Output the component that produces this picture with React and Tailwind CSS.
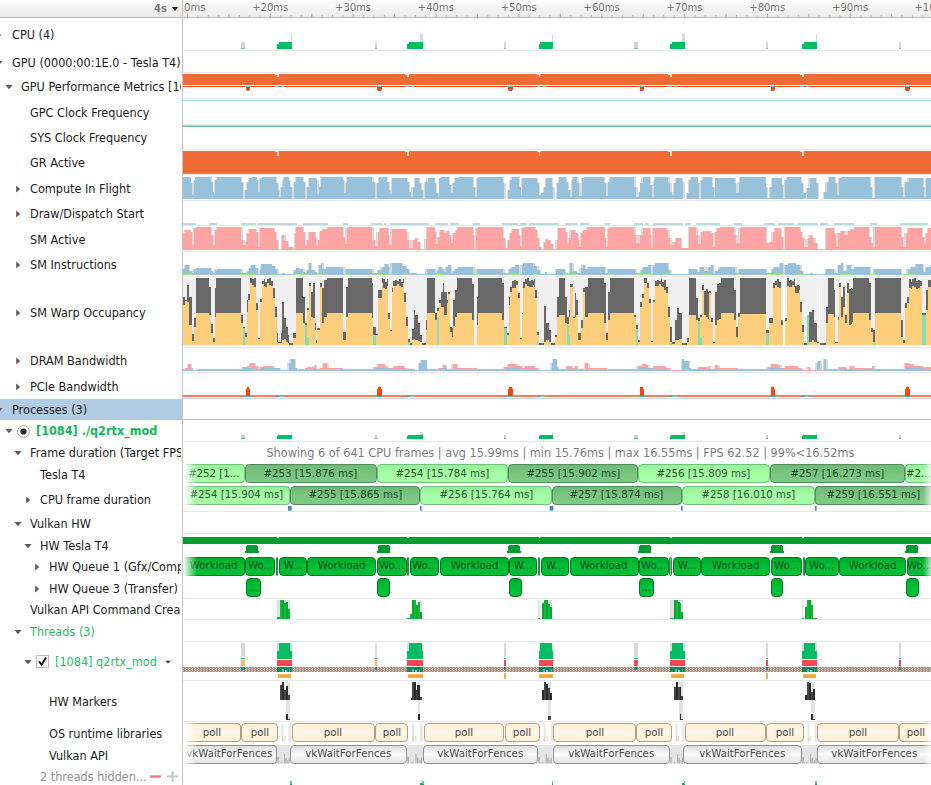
import React from "react";

/* Chart coordinates are sub-pixel units: three units per CSS pixel. */
const X0 = 549;
const X1 = 2793;

const join = (a, b, c) => {
  const parse = (s, off, lo, hi) =>
    s
      .trim()
      .split(/\s*,\s*/)
      .map((p) => p.split(" ").map(Number))
      .map(([x, ...v]) => [x + off, ...v])
      .filter((p) => p[0] >= lo && p[0] < hi);
  return [...parse(a, 0, 0, 900), ...parse(b, 900, 900, 1833), ...parse(c, 1833, 1833, 3000)];
};

const COMPUTE = join(
  "549 530,560 532,572 550,576 585,582 540,586 532,592 530,634 545,638 575,642 583,645 540,650 530,724 545,729 597,736 570,741 545,746 533,756 530,770 540,774 575,780 535,785 530,828 550,834 570,838 590,843 560,848 540,852 530,866 540,870 560,875 597,883 545,888 530",
  "0 530,10 545,15 597,22 560,27 533,48 540,52 583,58 560,63 530,128 540,132 578,137 550,141 530,217 545,225 597,232 550,237 530,262 545,267 570,271 583,275 535,320 545,327 575,332 590,338 562,345 535,357 550,362 570,368 597,376 545,383 533,404 550,408 578,414 590,418 535,424 530,447 555,453 580,460 548,465 535,475 530,520 560,525 590,530 535,534 530,608 550,613 597,624 570,629 540,635 532,657 560,662 585,667 535,712 548,716 585,722 578,732 560,737 535,755 560,760 597,771 550,776 530,798 545,803 570,810 590,815 540,820 530,832 550,838 588,846 535,852 530,913 550,918 587,924 545,930 530",
  "0 530,70 560,76 592,84 575,88 550,95 532,118 555,123 592,128 540,133 530,172 548,178 575,184 585,190 550,196 533,212 545,217 597,229 580,234 540,240 530,260 550,264 597,270 540,276 530,302 560,309 590,313 535,372 550,376 578,383 545,388 530,464 560,467 595,478 560,484 535,512 555,516 597,522 540,527 530,570 550,576 580,584 597,589 565,596 535,614 550,620 597,640 575,647 545,655 532,672 550,677 585,684 535,690 530,778 560,783 595,792 530,870 560,876 590,883 545,893 533,935 560,940 590,945 535"
);

const ACTIVE = join(
  "549 98,556 90,570 97,575 135,582 85,587 82,633 105,638 135,645 90,650 82,724 120,730 135,737 125,741 100,748 87,768 95,773 140,780 84,822 95,828 120,833 147,847 105,853 123,863 140,880 147,884 100,888 82",
  "0 82,10 97,15 135,22 120,28 95,45 110,48 135,55 120,60 92,67 87,82 82,130 110,134 133,140 85,145 82,217 120,225 137,233 97,240 85,263 105,268 135,275 87,318 97,322 120,328 145,338 120,345 115,352 127,360 147,377 118,382 82,404 95,408 132,415 110,420 90,432 100,440 92,448 105,452 130,460 100,468 90,475 82,520 105,523 147,529 85,535 82,610 115,614 145,624 120,630 98,636 87,656 105,660 138,667 85,672 82,705 90,712 115,717 140,723 147,733 125,738 118,744 120,750 133,758 147,770 120,775 85,795 95,800 130,806 115,812 90,824 100,834 120,838 140,844 100,850 90,862 82,914 115,918 140,924 85,930 82",
  "0 82,70 105,76 130,86 105,95 85,118 105,121 145,127 84,165 90,172 115,178 135,188 125,195 113,210 145,234 82,256 105,262 132,270 97,276 92,300 100,306 140,312 97,318 85,328 82,370 105,376 130,386 85,390 82,465 130,475 125,485 95,492 85,510 110,516 148,522 82,566 97,573 115,580 140,590 118,596 105,603 115,610 128,618 147,645 85,670 100,675 142,680 98,690 92,700 105,710 93,720 87,728 82,775 110,780 130,785 140,791 82,870 110,876 140,884 100,892 85,932 110,940 130,946 100,950 85"
);

const INSTR = join(
  "549 208,556 195,566 212,576 220,582 207,588 203,632 212,638 220,646 210,650 206,724 220,741 212,748 205,752 195,765 205,774 222,780 210,783 192,815 197,825 207,832 221,847 218,855 222,883 210,888 205",
  "0 207,10 215,16 220,22 210,27 190,32 210,45 215,50 220,57 195,62 190,67 207,78 202,130 222,138 208,217 219,235 210,245 200,255 193,263 200,268 222,275 190,305 197,318 208,326 220,338 218,350 222,380 206,405 218,412 210,417 200,425 207,432 215,438 200,444 195,452 219,460 213,466 207,474 202,520 222,530 208,610 220,628 208,635 200,645 195,657 222,665 195,670 190,700 197,712 210,720 222,735 217,742 222,768 208,795 218,810 190,817 213,830 218,842 205,848 195,855 208,864 202,914 220,924 208",
  "0 208,73 220,90 210,97 200,110 195,120 222,127 195,133 190,170 210,178 221,190 222,234 206,258 217,268 200,280 212,290 200,300 195,306 219,313 213,320 208,326 202,373 220,385 208,465 220,484 208,490 200,507 190,516 224,522 195,530 190,555 195,568 213,575 221,596 219,605 222,645 207,670 220,682 195,690 190,695 213,708 195,720 207,728 202,777 221,790 208,870 221,890 208,900 200,915 192,935 215,945 200,957 195"
);

const DRAM_PINK = join(
  "549 507,556 503,565 493,573 505,580 510,590 507,728 500,740 498,750 490,765 498,773 507,780 500,790 497,820 505,830 509,890 508",
  "0 507,15 503,22 500,42 495,48 507,60 503,70 490,82 504,130 507,220 502,233 492,255 497,262 503,275 505,282 497,312 503,322 509,375 508,415 503,430 495,437 507,458 493,470 505,530 506,613 500,625 492,650 497,665 503,675 497,705 503,715 511,770 506,800 498,815 505,825 497,832 508,855 490,865 504,920 506",
  "0 507,80 498,92 493,108 495,112 503,127 499,165 503,175 509,234 507,260 502,290 498,297 507,312 495,322 503,380 506,470 500,480 493,500 495,508 503,522 498,560 503,570 510,590 500,596 510,645 508,685 500,705 508,717 497,728 503,783 498,790 506,870 508,883 490,895 493,910 498,935 502"
);

const DRAM_BLUE = join(
  "549 510,730 505,755 502,760 508,790 505,840 511,866 490,872 478,886 505,890 510",
  "0 510,225 505,270 508,310 506,345 511,357 490,362 480,380 507,384 510,405 509,430 505,440 510,620 505,660 508,700 508,712 511,755 490,760 478,770 500,774 510,800 508,830 509",
  "0 510,85 505,125 508,178 512,213 478,220 483,233 505,240 510,260 507,300 510,475 505,515 508,575 512,617 490,622 482,628 512,640 478,646 510,690 507,783 507,790 510,885 500,935 507"
);

/* x, top of the grey band, top of the amber band, optional top of the green band */
const WARP = join(
  "549 290 315,555 300 302,560 255 305,568 290 375,576 403 422,583 355 380,588 234 340,628 262 345,633 373 400,638 413 425,645 265 350,649 234 340,722 345 370,728 380 410 385,736 400 410,740 300 335,745 283 300,750 234 248,757 240 260,768 310 330,773 415 418,780 298 305,785 240 255,820 265 293,826 320 350,830 398 425 425,835 425 430,842 400 430,847 307 420,852 355 418,857 380 425,863 405 430,868 430 434,880 398 415,887 340 345,889 234 340",
  "0 234 340,10 290 370,15 370 375 375,21 325 330 410,26 248 258,32 275 350,38 250 355,44 370 390,48 420 430,52 385 390,60 250 260,67 265 370,73 240 350,80 234 340,128 395 420,138 262 350,145 234 340,215 250 355,220 380 405 405,228 403 406,235 270 295,245 234 250,249 240 262,263 340 358,270 390 394,276 265 275,280 240 255,313 280 305,319 350 378,324 417 427 427,330 430 434,337 388 420,342 330 418,346 345 420,353 370 422,360 405 425,366 430 434,377 360 390,382 234 340,405 340 360,410 325 333 352,417 300 310,422 275 320,428 250 320,433 275 345,440 300 310,444 275 283,450 380 395,455 385 412,460 300 378,466 270 350,472 234 340,516 252 360,522 435 436,530 290 375,535 234 340,607 250 360,613 380 388 385,620 400 405,626 290 315,631 260 275,637 240 260,655 280 295,660 415 416,665 340 343,670 240 258,705 270 295,712 395 405 425,718 430 434,732 317 425,738 370 420,746 390 425,754 430 434,765 405 410,772 290 350,777 234 345,794 290 370,800 350 372 375,806 330 350 405,811 252 260,818 350 355,824 280 350,828 300 345,834 400 420,842 360 385,848 265 275,854 260 350,863 234 340,912 250 370,918 400 420,924 275 360,930 234 340",
  "0 234 340,68 345 350,75 375 395 387,82 420 425,88 305 320,93 283 295,98 234 248,108 250 265,115 298 310,120 423 425,126 300 305,132 240 255,158 240 270,165 262 280,171 320 350,177 380 425 430,184 425 432,192 360 420,197 325 420,203 340 418,212 430 435,228 415 425,234 234 345,256 295 360,260 355 365 362,267 345 350 410,274 255 270,279 270 350,295 272 280,301 355 365,306 425 430,313 275 375,318 250 355,330 234 340,370 270 360,375 382 410,381 340 350,387 234 342,465 390 415 400,475 355 370,487 248 265,492 240 258,510 360 375,516 436 436,522 355 362,527 240 258,553 255 275,568 307 335,573 375 395 430,578 430 434,588 345 425 345,594 335 425,602 330 420,610 370 425,618 425 430,624 436 436,628 430 434,645 320 370,652 234 342,668 270 350,673 425 430,680 350 360,684 250 262,690 290 350,696 260 320,702 345 370,708 250 280,713 265 370,725 234 340,775 250 360,780 385 395,785 390 425 425,792 234 340,870 360 412,876 420 430,883 310 325,888 290 310,893 240 262,932 340 345 345,945 270 330,950 240 262"
);

/* Break wide uneven stretches into narrow columns. */
const jagged = (pts) => {
  const out = [];
  pts.forEach((p, i) => {
    const end = i + 1 < pts.length ? pts[i + 1][0] : X1;
    if (p[1] > 234 && p[1] < 275 && end - p[0] > 10) {
      let k = 0;
      for (let x = p[0]; x < end; x += 5.5) {
        const j = (k + i) % 7;
        out.push([x, Math.max(234, p[1] + [0, 3, -4, 5, -2, -6, 2][j]), p[2] + [3, -4, 2, 6, -5, 0, 4][j]]);
        k += 1;
      }
    } else out.push(p);
  });
  return out;
};
const WARP_COLS = jagged(WARP);

const stepPath = (pts, base, pick = 1) => {
  let d = `M${pts[0][0]} ${base}`;
  pts.forEach((p, i) => {
    const end = i + 1 < pts.length ? pts[i + 1][0] : X1;
    const y = p[pick] === undefined ? base : p[pick];
    d += `L${p[0]} ${y}L${end} ${y}`;
  });
  return `${d}L${X1} ${base}Z`;
};

const fringePath = (pts) => {
  let d = "";
  pts.forEach((p, i) => {
    const end = i + 1 < pts.length ? pts[i + 1][0] : X1;
    const w = Math.min(4, (end - p[0]) * 0.6);
    const prev = pts[i - 1];
    const next = pts[i + 1];
    if (prev && p[1] - prev[1] > 5) d += `M${p[0]} ${prev[1]}h${w}V${p[1]}h${-w}Z`;
    if (next && p[1] - next[1] > 5) d += `M${end - w} ${next[1]}h${w}V${p[1]}h${-w}Z`;
  });
  return d;
};

const BURSTS = [
  [831, 875],
  [1221, 1270],
  [1616, 1660],
  [2010, 2055],
  [2406, 2450],
];
const TICKS = [
  [723, 734],
  [1124, 1130],
  [1513, 1519],
  [1903, 1914],
  [2298, 2303],
  [2698, 2704],
];
const UPLOADS = [738, 1132, 1525, 1919, 2312, 2716];

function R({ a, b, y, h, c }) {
  return <rect x={a} y={y} width={b - a} height={h} fill={c} />;
}

function Chart({ top, h, children }) {
  return (
    <svg className="block h-full w-full" viewBox={`${X0} ${top} ${X1 - X0} ${h * 3}`} preserveAspectRatio="none" shapeRendering="crispEdges">
      {children}
    </svg>
  );
}

function AreaLane({ top, h, data, base, color, children }) {
  return (
    <Chart top={top} h={h}>
      <path d={fringePath(data)} fill="#d9d9d9" />
      <path d={stepPath(data, base)} fill={color} />
      {children}
    </Chart>
  );
}

function CpuLane() {
  return (
    <Chart top={54} h={33}>
      {TICKS.map(([a, b]) => (
        <g key={a}>
          <R a={a} b={b} y={126} h={18} c="#d4d4d4" />
          <R a={a} b={b} y={144} h={4} c="#5fcf95" />
        </g>
      ))}
      {BURSTS.map(([a, b], i) => (
        <g key={a}>
          <R a={b - (i % 2 ? 10 : 3)} b={b} y={103} h={26} c="#d9d9d9" />
          <R a={a + 5} b={b} y={126} h={22} c="#00be64" />
          <R a={a} b={a + 6} y={132} h={16} c="#00be64" />
        </g>
      ))}
    </Chart>
  );
}

function PerfLane() {
  return (
    <Chart top={219} h={26}>
      <R a={X0} b={X1} y={261} h={33} c="#fcfcfc" />
      <R a={X0} b={X1} y={222} h={33} c="#f06b36" />
      <R a={X0} b={X1} y={258} h={3} c="#f8431a" />
      {BURSTS.map(([a], i) => (
        <g key={a}>
          <R a={a - 5} b={a + 6} y={222} h={i % 2 ? 3 : 2} c="#f1d5ca" />
          <R a={a} b={a + 5} y={222} h={8} c="#ececec" />
          <R a={a - 5} b={a + 6} y={258} h={3} c="#3fc4cf" />
          <R a={a + 13} b={a + 21} y={258} h={3} c="#3fc4cf" />
        </g>
      ))}
      {UPLOADS.map((x) => (
        <g key={x}>
          <R a={x - 3} b={x + 14} y={258} h={3} c="#2fb7bf" />
          <R a={x} b={x + 13} y={261} h={8} c="#ff4412" />
          <R a={x + 2} b={x + 10} y={267} h={6} c="#ff4412" />
        </g>
      ))}
    </Chart>
  );
}

function GrLane() {
  return (
    <Chart top={450} h={25}>
      <R a={X0} b={X1} y={453} h={68} c="#f06b36" />
      <R a={X0} b={X1} y={520} h={2} c="#d98a6b" />
      {BURSTS.map(([a]) => (
        <g key={a}>
          <R a={a - 5} b={a + 6} y={453} h={3} c="#dcdcdc" />
          <R a={a} b={a + 5} y={453} h={16} c="#e0dedc" />
        </g>
      ))}
    </Chart>
  );
}

const DISPATCH = [
  [549, 588], [627, 650], [723, 768], [774, 890], [910, 983], [1028, 1045], [1113, 1146], [1152, 1158],
  [1170, 1286], [1304, 1343], [1350, 1377], [1418, 1440], [1507, 1553], [1559, 1580], [1588, 1676],
  [1695, 1733], [1740, 1766], [1813, 1830], [1903, 1930], [1936, 1948], [1959, 2049], [2056, 2073],
  [2089, 2161], [2203, 2225], [2291, 2326], [2333, 2383], [2390, 2455], [2461, 2484], [2501, 2563],
  [2609, 2631], [2699, 2783],
];

function DispatchLane() {
  return (
    <Chart top={603} h={25}>
      {DISPATCH.map(([a, b], i) => (
        <R key={a} a={a} b={b} y={669} h={5} c={i % 4 === 2 ? "#b6e3cf" : "#bcd6e4"} />
      ))}
    </Chart>
  );
}

const INSTR_GREEN = [
  [556, 576], [720, 768], [815, 830], [885, 925], [950, 968], [1035, 1050], [1130, 1165], [1205, 1222],
  [1305, 1330], [1425, 1440], [1520, 1560], [1598, 1615], [1695, 1730], [1820, 1835], [1905, 1960],
  [1985, 2005], [2110, 2135], [2210, 2222], [2300, 2350], [2388, 2410], [2520, 2560], [2610, 2630], [2705, 2745],
];

function WarpLane() {
  return (
    <Chart top={231} h={71}>
      <R a={X0} b={X1} y={234} h={203} c="#f0f0f0" />
      <path d={stepPath(WARP_COLS, 436, 1)} fill="#686868" />
      <path d={stepPath(WARP_COLS, 436, 2)} fill="#fdcf7c" />
      <path d={stepPath(WARP_COLS, 436, 3)} fill="#8bdcb2" />
      <R a={2349} b={2355} y={234} h={203} c="#ffffff" />
      <R a={2457} b={2461} y={234} h={203} c="#ffffff" />
    </Chart>
  );
}

function DramLane() {
  return (
    <Chart top={444} h={25}>
      <path d={fringePath(DRAM_BLUE)} fill="#d4dade" />
      <path d={fringePath(DRAM_PINK)} fill="#dcdcdc" />
      <path d={stepPath(DRAM_PINK, 512)} fill="#ffa4a4" />
      <path d={stepPath(DRAM_BLUE, 512)} fill="#98c2dc" />
    </Chart>
  );
}

function PcieLane() {
  return (
    <Chart top={519} h={26}>
      <R a={X0} b={X1} y={586} h={4} c="#ff7a5c" />
      {BURSTS.map(([a]) => (
        <g key={a}>
          <R a={a - 3} b={a + 5} y={584} h={3} c="#e07a5c" />
          <R a={a - 3} b={a + 5} y={587} h={3} c="#6b8a80" />
          <R a={a + 8} b={a + 20} y={587} h={3} c="#57dcd8" />
        </g>
      ))}
      {UPLOADS.map((x) => (
        <g key={x}>
          <R a={x} b={x + 13} y={557} h={12} c="#e8e0dc" />
          <R a={x + 2} b={x + 10} y={560} h={28} c="#ff4412" />
          <R a={x} b={x + 13} y={567} h={20} c="#ff4412" />
          <R a={x - 3} b={x + 15} y={587} h={4} c="#3fbcb8" />
        </g>
      ))}
      <R a={X0} b={X1} y={594} h={3} c="#c6d6ea" />
    </Chart>
  );
}

function ProcessLane() {
  return (
    <Chart top={75} h={22}>
      {TICKS.map(([a, b]) => (
        <g key={a}>
          <R a={a} b={b} y={121} h={7} c="#cfcfcf" />
          <R a={a} b={b} y={128} h={3} c="#3fc785" />
        </g>
      ))}
      {BURSTS.map(([a, b], i) => (
        <g key={a}>
          <R a={b - (i % 2 ? 10 : 3)} b={b} y={110} h={12} c="#d4d4d4" />
          <R a={a + 4} b={b} y={120} h={11} c="#00be64" />
          <R a={a} b={a + 5} y={124} h={7} c="#00be64" />
        </g>
      ))}
    </Chart>
  );
}

function HwLane() {
  return (
    <Chart top={417} h={22}>
      <R a={X0} b={X1} y={426} h={20} c="#009c31" />
      {BURSTS.map(([a]) => (
        <R key={a} a={a} b={a + 5} y={426} h={3} c="#cfeed8" />
      ))}
      {[738, 1133, 1525, 1917, 2313, 2719].map((x, i) => (
        <g key={x}>
          <R a={x + 3} b={x + 33} y={450} h={3} c="#009c31" />
          <R a={x} b={x + 36} y={453} h={20} c="#009c31" />
          <R a={x - 3} b={x + (i % 2 ? 36 : 39)} y={468} h={5} c="#009c31" />
        </g>
      ))}
    </Chart>
  );
}

const CMD = [
  [831, 82, 10], [841, 30, 5], [847, 30, 5], [853, 38, 4], [858, 37, 5], [863, 58, 6],
  [1221, 83, 10], [1231, 72, 5], [1236, 30, 5], [1242, 31, 5], [1248, 45, 4], [1254, 35, 5], [1260, 67, 5],
  [1615, 83, 5], [1626, 40, 5], [1632, 30, 5], [1638, 30, 5], [1644, 42, 4], [1649, 52, 5],
  [2010, 83, 10], [2022, 30, 5], [2028, 30, 5], [2034, 35, 4], [2039, 38, 4], [2044, 65, 5],
  [2406, 83, 5], [2416, 50, 5], [2422, 30, 5], [2428, 30, 5], [2434, 45, 5], [2440, 83, 9],
];
const MARK = [
  [841, 285, 4], [846, 276, 5], [852, 300, 4], [857, 287, 5], [863, 315, 6],
  [1232, 325, 3], [1235, 275, 5], [1241, 275, 5], [1247, 300, 4], [1252, 285, 6], [1259, 320, 5],
  [1626, 300, 5], [1632, 275, 5], [1638, 283, 5], [1644, 295, 4], [1649, 310, 5],
  [2022, 290, 4], [2027, 275, 5], [2033, 290, 5], [2039, 292, 4], [2044, 318, 5],
  [2416, 315, 5], [2422, 275, 4], [2427, 278, 5], [2433, 305, 4], [2438, 297, 5],
];

function CommandLane() {
  return (
    <Chart top={27} h={21}>
      {[[831, 869], [1254, 1266], [1615, 1619], [1636, 1655], [2010, 2022], [2028, 2049], [2406, 2409], [2420, 2440]].map(([a, b]) => (
        <R key={a} a={a} b={b} y={30} h={56} c="#dfe3df" />
      ))}
      {CMD.map(([x, y, w], i) => (
        <R key={x} a={x} b={x + w + 1} y={y} h={86 - y} c={i % 2 ? "#0bbf35" : "#12a338"} />
      ))}
    </Chart>
  );
}

function ThreadLane() {
  return (
    <Chart top={156} h={39}>
      <defs>
        <pattern id="hatch" width="9" height="6" patternUnits="userSpaceOnUse">
          <rect width="9" height="6" fill="#a88f81" />
          <rect x="0" y="0" width="4" height="3" fill="#d4c7bd" />
          <rect x="5" y="3" width="3" height="3" fill="#d4c7bd" />
        </pattern>
      </defs>
      <R a={X0} b={X1} y={230} h={16} c="url(#hatch)" />
      {TICKS.map(([a, b], i) => (
        <g key={a}>
          <R a={a} b={b} y={159} h={42} c="#d9d9d9" />
          <R a={a} b={b} y={204} h={3} c="#19b061" />
          <R a={a} b={b} y={210} h={18} c={i < 2 ? "#f3bd62" : "#ff4451"} />
          <R a={a} b={b} y={231} h={8} c="#2d8c8c" />
          {(i === 2 || i === 4) && <R a={a} b={b} y={249} h={18} c="#efb04a" />}
        </g>
      ))}
      {BURSTS.map(([a, b]) => (
        <g key={a}>
          <R a={a} b={b} y={159} h={48} c="#dadada" />
          <R a={a + 5} b={b - 5} y={159} h={48} c="#00be64" />
          <R a={a} b={b} y={183} h={24} c="#00be64" />
          <R a={a} b={b} y={209} h={19} c="#ff4451" />
          <R a={a} b={b} y={230} h={16} c="#0f8a55" />
          <R a={a + 14} b={a + 20} y={237} h={9} c="#62a6e0" />
          <R a={a + 23} b={a + 29} y={240} h={6} c="#8fc4ee" />
          <R a={a + 35} b={a + 40} y={237} h={9} c="#5b95c8" />
          <R a={a + 2} b={b - 2} y={252} h={12} c="#efb04a" />
          <path d={`M${a + 8} 258H${b - 4}`} stroke="#d9993b" strokeWidth="3" strokeDasharray="3 3" />
        </g>
      ))}
    </Chart>
  );
}

function MarkerLane() {
  return (
    <Chart top={273} h={41}>
      {[858, 1254, 1643, 2038, 2433].map((x, i) => (
        <g key={x}>
          <R a={x} b={x + (i === 1 ? 5 : 11)} y={275} h={114} c="#e2e2e2" />
          <R a={x + 1} b={x + 5} y={i === 2 ? 378 : 372} h={i === 2 ? 11 : 17} c="#2e2e2e" />
          {i !== 1 && <R a={x + 5} b={x + 11} y={i === 2 ? 378 : 386} h={i === 2 ? 11 : 3} c="#4d4d4d" />}
        </g>
      ))}
      {MARK.map(([x, y, w], i) => (
        <R key={x} a={x} b={x + w + 1} y={y} h={330 - y} c={i % 2 ? "#2b2b2b" : "#474747"} />
      ))}
    </Chart>
  );
}

function HiddenLane() {
  return (
    <Chart top={528} h={19}>
      {[[870, 875], [1261, 1271], [1656, 1660], [2045, 2055], [2446, 2450]].map(([a, b]) => (
        <g key={a}>
          <R a={a} b={b} y={576} h={6} c="#10a95c" />
          <R a={b - 4} b={b} y={572} h={6} c="#4fcf90" />
        </g>
      ))}
    </Chart>
  );
}

/* A lane of labelled blocks laid out left to right with spacers between them. */
function Blocks({ items, cls, gap, lift = "pb-px" }) {
  const out = [];
  let x = X0;
  items.forEach(([a, b, label, kind], i) => {
    if (a > x) {
      out.push(
        <div key={`g${a}`} className="h-full shrink-0" style={{ width: (a - x) / 3 }}>
          {gap && a - x > 20 ? gap : null}
        </div>
      );
    }
    const edge = (i === 0 ? " rounded-l-none border-l-0" : "") + (b >= X1 ? " rounded-r-none border-r-0" : "");
    out.push(
      <div
        key={a}
        className={`flex h-full shrink-0 items-center justify-center overflow-hidden whitespace-nowrap rounded-[4px] border text-[11px] leading-none ${lift} ${cls(kind)}${edge}`}
        style={{ width: (b - a) / 3 }}
      >
        {label && <span className="block shrink-0 scale-x-[0.932]">{label}</span>}
      </div>
    );
    x = b;
  });
  return <div className="flex h-full w-full overflow-hidden">{out}</div>;
}

function Fade({ children }) {
  return (
    <div className="relative h-full w-full">
      {children}
      <div className="absolute inset-y-0 left-0 w-3.5 bg-gradient-to-r from-white to-transparent" />
      <div className="absolute inset-y-0 right-0 w-2 bg-gradient-to-l from-white/70 to-transparent" />
    </div>
  );
}

const frameCls = (k) =>
  k === "d"
    ? "border-[#4f8f58] bg-gradient-to-b from-[#70b876] via-[#79c680] to-[#7fcb86] text-[#21452a]"
    : "border-[#76bf7c] bg-gradient-to-b from-[#93f296] via-[#a6ffa6] to-[#a6ffa6] text-[#2b5730]";
const workCls = (k) =>
  k === "t"
    ? "border-[#2d8a48] bg-[#7fbf8d]"
    : "border-[#007a22] bg-gradient-to-b from-[#00ab2d] via-[#00c036] to-[#00bd35] text-[#044d16]";
const pollCls = () => "border-[#b3a07f] bg-gradient-to-b from-[#ffefd6] via-[#fff6e9] to-[#ffefd9] text-[#484540]";
const fenceCls = () => "border-[#8f8f8f] bg-gradient-to-b from-[#dedede] via-[#fafafa] to-[#e4e4e4] text-[#4a4a4a]";

const GPU_FRAMES = [
  [549, 735, "#252 [1...", "l"],
  [735, 1130, "#253 [15.876 ms]", "d"],
  [1130, 1525, "#254 [15.784 ms]", "l"],
  [1525, 1914, "#255 [15.902 ms]", "d"],
  [1914, 2309, "#256 [15.809 ms]", "l"],
  [2309, 2716, "#257 [16.273 ms]", "d"],
  [2716, 2793, "#2...", "l"],
];
const CPU_FRAMES = [
  [549, 870, "#254 [15.904 ms]", "l"],
  [870, 1261, "#255 [15.865 ms]", "d"],
  [1261, 1655, "#256 [15.764 ms]", "l"],
  [1655, 2045, "#257 [15.874 ms]", "d"],
  [2045, 2445, "#258 [16.010 ms]", "l"],
  [2445, 2793, "#259 [16.551 ms]", "d"],
];
const QUEUE1 = [
  [549, 734, "Workload"], [735, 826, "Wo..."], [828, 834, "", "t"], [836, 920, "W..."], [921, 1129, "Workload"],
  [1130, 1221, "Wo..."], [1222, 1225, "", "t"], [1226, 1315, "Wo..."], [1316, 1524, "Workload"], [1525, 1609, "W..."],
  [1611, 1618, "", "t"], [1620, 1705, "W..."], [1706, 1913, "Workload"], [1914, 2003, "Wo..."], [2005, 2013, "", "t"],
  [2016, 2100, "W..."], [2101, 2309, "Workload"], [2310, 2405, "Wo..."], [2406, 2410, "", "t"], [2411, 2512, "Wo..."],
  [2513, 2715, "Workload"], [2716, 2793, "Wo..."],
];
const QUEUE3 = [
  [549, 550, "", "n"], [735, 780, "..."], [1130, 1169, ""], [1525, 1564, ""], [1914, 1959, "..."], [2310, 2348, ""], [2716, 2754, ""],
];
const POLLS = [
  [549, 723, "poll"], [724, 835, "poll"], [876, 1124, "poll"], [1125, 1225, "poll"], [1271, 1513, "poll"], [1514, 1619, "poll"],
  [1660, 1908, "poll"], [1909, 2015, "poll"], [2055, 2297, "poll"], [2298, 2411, "poll"], [2451, 2697, "poll"], [2698, 2793, "poll"],
];
const FENCES = [
  [549, 831, "vkWaitForFences"], [871, 1220, "vkWaitForFences"], [1268, 1614, "vkWaitForFences"],
  [1658, 2009, "vkWaitForFences"], [2050, 2405, "vkWaitForFences"], [2451, 2793, "vkWaitForFences"],
];

const pollGap = (
  <svg className="h-full w-full" viewBox="0 0 42 57" preserveAspectRatio="none">
    <path d="M11 0h6v57h-6zM33 0h7v57h-7z" fill="#e6e6e6" />
    <path d="M13 42h3v13h-3zM20 38h3v17h-3z" fill="#e3cfa5" />
  </svg>
);
const fenceGap = (
  <svg className="h-full w-full" viewBox="0 0 40 57" preserveAspectRatio="none">
    <path d="M0 0h40v57H0z" fill="#e4e4e4" />
    <path d="M1 36h4v19H1zM21 28h3v27h-3zM25 38h4v17h-4zM31 45h3v10h-3zM35 38h3v17h-3zM11 50h3v5h-3z" fill="#b0b0b0" />
  </svg>
);

function CpuFrameLane() {
  return (
    <div className="flex h-full w-full flex-col">
      <div className="h-[19px]">
        <Fade>
          <Blocks items={CPU_FRAMES} cls={frameCls} lift="pb-[2px]" />
        </Fade>
      </div>
      <svg className="mt-[0.5px] block h-[5px] w-full" viewBox={`${X0} 0 ${X1 - X0} 15`} preserveAspectRatio="none">
        {[[864, 875], [1260, 1265], [1649, 1660], [2043, 2048], [2445, 2450]].map(([a, b]) => (
          <R key={a} a={a} b={b} y={0} h={14} c="#4584bd" />
        ))}
      </svg>
    </div>
  );
}

function Twist({ open }) {
  return (
    <svg className="h-2 w-2 shrink-0" viewBox="0 0 8 8" fill="#5c5c5c">
      {open ? <path d="M0.4 2h7.2L4 6.2z" /> : <path d="M2.2 0.5v7L6.2 4z" />}
    </svg>
  );
}

const PAD = ["pl-[11.7px]", "pl-[21px]", "pl-[30.3px]", "pl-[39.7px]", "pl-[49px]"];
const TPAD = ["-ml-[5px]", "pl-[5px]", "pl-[14px]", "pl-[23.5px]", "pl-[33px]"];
const TGAP = ["mr-[8.7px]", "mr-[8px]", "mr-[8.3px]", "mr-[8.2px]", "mr-[8px]"];

function Label({ lv, tw, text, tone }) {
  const color = tone === "green" ? "text-[#1fbd68]" : "text-[#1c1c1c]";
  return (
    <div className={`flex h-full items-center overflow-hidden whitespace-nowrap pt-px ${tw ? TPAD[lv] : PAD[lv]} ${color}`}>
      {tw && (
        <span className={`flex ${TGAP[lv]}`}>
          <Twist open={tw === "open"} />
        </span>
      )}
      <span className="block shrink-0 origin-left scale-x-[0.94]">{text}</span>
    </div>
  );
}

function Row({ h, label, line = true, tint, children }) {
  return (
    <div className={`flex w-full shrink-0 ${h}`}>
      <div className={`w-[183px] shrink-0 overflow-hidden border-r border-[#c4c4c4] pr-[1px] ${tint ? "bg-[#b2cde3]" : ""}`}>{label}</div>
      <div
        className={`min-w-0 flex-1 overflow-hidden ${
          tint ? "shadow-[inset_0_-1px_0_#a9c1da]" : line ? "shadow-[inset_0_-1px_0_#e6e6e6]" : ""
        }`}
      >
        {children}
      </div>
    </div>
  );
}

function Ruler() {
  const ticks = [];
  for (let i = 0; i < 73; i++) ticks.push(562.5 + i * 31.07);
  return (
    <svg className="block h-full w-full" viewBox={`${X0} 0 ${X1 - X0} 51`} preserveAspectRatio="none">
      {ticks.map((x, i) => (
        <rect key={i} x={x - 1.5} y={i % 4 ? 45 : 41} width="3" height={i % 4 ? 7 : 11} fill={i % 4 ? "#bcbcbc" : "#a4a4a4"} />
      ))}
      {["+10ms", "+20ms", "+30ms", "+40ms", "+50ms", "+60ms", "+70ms", "+80ms", "+90ms", "+100ms"].map((t, i) => (
        <text key={t} x={562 + i * 248.55 + (i === 9 ? 8 : 0)} y="33" textAnchor="middle" fontSize="30" fill="#757575">
          {t}
        </text>
      ))}
    </svg>
  );
}

export default function App() {
  return (
    <div className="flex h-[785px] w-[931px] flex-col overflow-hidden bg-white font-['DejaVu_Sans',sans-serif] text-[12px] leading-none">
      <div className="flex h-[18px] shrink-0 border-b border-[#b9b9b9] bg-gradient-to-b from-[#fdfdfd] to-[#ebebeb]">
        <div className="flex w-[183px] shrink-0 items-center justify-end border-r border-[#c4c4c4] pr-[3px] pt-px text-[10px] font-bold text-[#777]">
          <span>4s</span>
          <svg className="ml-[4px] h-2 w-2" viewBox="0 0 8 8">
            <path d="M0.8 2h6.4L4 6z" fill="#222" />
          </svg>
        </div>
        <div className="min-w-0 flex-1">
          <Ruler />
        </div>
      </div>

      <Row h="h-[33px]" label={<Label lv={0} tw="closed" text="CPU (4)" />}>
        <CpuLane />
      </Row>
      <Row h="h-[22px]" label={<Label lv={0} tw="open" text="GPU (0000:00:1E.0 - Tesla T4)" />} />
      <Row h="h-[26px]" label={<Label lv={1} tw="open" text="GPU Performance Metrics [10" />}>
        <PerfLane />
      </Row>
      <Row h="h-[26px]" label={<Label lv={2} text="GPC Clock Frequency" />}>
        <div className="mt-px h-px bg-[#9adfc0]" />
      </Row>
      <Row h="h-[25px]" label={<Label lv={2} text="SYS Clock Frequency" />}>
        <div className="h-[2px] border-t border-[#c4d2cb] bg-[#63bd90]" />
      </Row>
      <Row h="h-[25px]" label={<Label lv={2} text="GR Active" />}>
        <GrLane />
      </Row>
      <Row h="h-[26px]" label={<Label lv={2} tw="closed" text="Compute In Flight" />}>
        <AreaLane top={525} h={26} data={COMPUTE} base={597} color="#98c2dc" />
      </Row>
      <Row h="h-[25px]" label={<Label lv={2} tw="closed" text="Draw/Dispatch Start" />}>
        <DispatchLane />
      </Row>
      <Row h="h-[26px]" label={<Label lv={2} text="SM Active" />}>
        <AreaLane top={78} h={26} data={ACTIVE} base={150} color="#ffa4a4" />
      </Row>
      <Row h="h-[25px]" label={<Label lv={2} tw="closed" text="SM Instructions" />}>
        <AreaLane top={156} h={25} data={INSTR} base={224} color="#98c2dc">
          {INSTR_GREEN.map(([a, b]) => (
            <R key={a} a={a} b={b} y={221} h={3} c="#9bea7c" />
          ))}
        </AreaLane>
      </Row>
      <Row h="h-[71px]" label={<Label lv={2} tw="closed" text="SM Warp Occupancy" />}>
        <WarpLane />
      </Row>
      <Row h="h-[25px]" label={<Label lv={2} tw="closed" text="DRAM Bandwidth" />}>
        <DramLane />
      </Row>
      <Row h="h-[26px]" line={false} label={<Label lv={2} tw="closed" text="PCIe Bandwidth" />}>
        <PcieLane />
      </Row>
      <Row h="h-[21px]" tint label={<Label lv={0} tw="open" text="Processes (3)" />} />
      <Row
        h="h-[22px]"
        label={
          <div className="flex h-full items-center whitespace-nowrap pl-[5px] font-bold text-[#12b85c]">
            <Twist open />
            <svg className="ml-[4px] mr-[6px] h-[13px] w-[13px] shrink-0" viewBox="0 0 13 13">
              <circle cx="6.5" cy="6.5" r="5.9" fill="#fff" stroke="#a3a3a3" />
              <circle cx="6.5" cy="6.5" r="3.1" fill="#2c2c2c" />
            </svg>
            <span className="block shrink-0 origin-left scale-x-[0.94]">[1084] ./q2rtx_mod</span>
          </div>
        }
      >
        <ProcessLane />
      </Row>
      <Row h="h-[21px]" line={false} label={<Label lv={2} tw="open" text="Frame duration (Target FPS" />}>
        <div className="flex h-full items-center justify-center whitespace-nowrap pl-[6px] pt-px text-[#7c7c7c]">
          <span className="block shrink-0 scale-x-[0.941]">
            Showing 6 of 641 CPU frames | avg 15.99ms | min 15.76ms | max 16.55ms | FPS 62.52 | 99%&lt;16.52ms
          </span>
        </div>
      </Row>
      <Row h="h-[23px]" line={false} label={<Label lv={3} text="Tesla T4" />}>
        <div className="h-full bg-[#fafafa] pt-px pb-[3px]">
          <Fade>
            <Blocks items={GPU_FRAMES} cls={frameCls} />
          </Fade>
        </div>
      </Row>
      <Row h="h-[26px]" label={<Label lv={3} tw="closed" text="CPU frame duration" />}>
        <CpuFrameLane />
      </Row>
      <Row h="h-[22px]" label={<Label lv={2} tw="open" text="Vulkan HW" />} />
      <Row h="h-[22px]" line={false} label={<Label lv={3} tw="open" text="HW Tesla T4" />}>
        <HwLane />
      </Row>
      <Row h="h-[21px]" line={false} label={<Label lv={4} tw="closed" text="HW Queue 1 (Gfx/Comp" />}>
        <div className="h-full pt-[0.5px] pb-[1.5px]">
          <Fade>
            <Blocks items={QUEUE1} cls={workCls} lift="pb-[2px]" />
          </Fade>
        </div>
      </Row>
      <Row h="h-[22px]" label={<Label lv={4} tw="closed" text="HW Queue 3 (Transfer)" />}>
        <div className="h-full pt-px pb-[2px]">
          <Blocks items={QUEUE3} cls={(k) => (k === "n" ? "border-transparent" : workCls(k))} />
        </div>
      </Row>
      <Row h="h-[21px]" label={<Label lv={2} text="Vulkan API Command Crea" />}>
        <CommandLane />
      </Row>
      <Row h="h-[22px]" label={<Label lv={2} tw="open" tone="green" text="Threads (3)" />} />
      <Row
        h="h-[39px]"
        label={
          <div className="flex h-full items-center whitespace-nowrap pl-[23.5px] text-[#1fbd68]">
            <Twist open />
            <svg className="ml-[4.5px] mr-[6px] h-[13px] w-[13px] shrink-0" viewBox="0 0 13 13">
              <rect x="0.5" y="0.5" width="12" height="12" fill="#fff" stroke="#b9b9b9" />
              <path d="M3 6.2l2.6 3.6L10 2.6" fill="none" stroke="#111" strokeWidth="1.9" />
            </svg>
            <span className="block shrink-0 origin-left scale-x-[0.94]">[1084] q2rtx_mod</span>
            <svg className="ml-[1px] h-2 w-2 shrink-0" viewBox="0 0 8 8">
              <path d="M1.4 2.8h5.2L4 5.6z" fill="#333" />
            </svg>
          </div>
        }
      >
        <ThreadLane />
      </Row>
      <Row h="h-[41px]" label={<Label lv={4} text="HW Markers" />}>
        <MarkerLane />
      </Row>
      <Row h="h-[22px]" line={false} label={<Label lv={4} text="OS runtime libraries" />}>
        <div className="h-full pt-px pb-[2px]">
          <Fade>
            <Blocks items={POLLS} cls={pollCls} gap={pollGap} />
          </Fade>
        </div>
      </Row>
      <Row h="h-[22px]" line={false} label={<Label lv={4} text="Vulkan API" />}>
        <div className="h-full pt-px pb-[2px]">
          <Fade>
            <Blocks items={FENCES} cls={fenceCls} gap={fenceGap} lift="pb-[2px]" />
          </Fade>
        </div>
      </Row>
      <Row
        h="h-[20px]"
        line={false}
        label={
          <div className="flex h-full items-center whitespace-nowrap pl-[39.7px] pt-px text-[#929292]">
            <span className="block shrink-0 origin-left scale-x-[0.94]">2 threads hidden...</span>
            <svg className="-ml-[3px] h-[11px] w-[28px] shrink-0" viewBox="0 0 28 11">
              <path d="M0 5.5h11" stroke="#f4787c" strokeWidth="2.4" />
              <path d="M17 5.5h11M22.5 0v11" stroke="#c9c9c9" strokeWidth="2.2" />
            </svg>
          </div>
        }
      >
        <HiddenLane />
      </Row>
    </div>
  );
}
